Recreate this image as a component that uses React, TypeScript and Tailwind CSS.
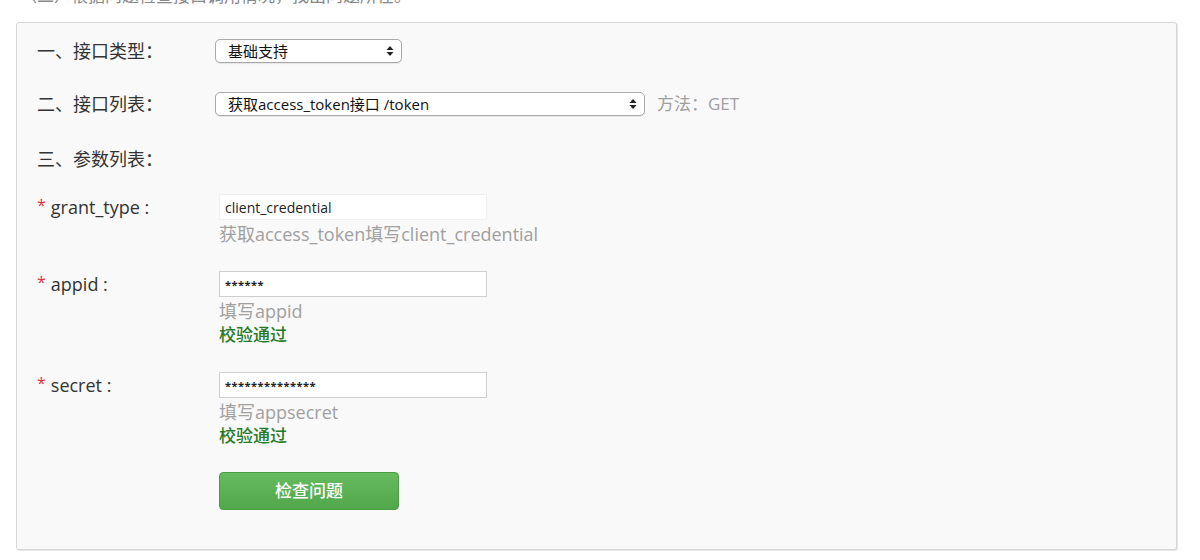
import React from "react";

const font = { fontFamily: '"Open Sans", "Noto Sans CJK SC", sans-serif' };

function UpDown() {
  return (
    <svg width="8" height="12" viewBox="0 0 8 12" className="shrink-0">
      <path d="M4 1 L7.5 5 H0.5 Z" fill="#222" />
      <path d="M4 11 L7.5 7 H0.5 Z" fill="#222" />
    </svg>
  );
}

function FakeSelect({ value, width }: { value: string; width: string }) {
  return (
    <div
      className={`${width} h-[24px] flex items-center justify-between pl-[12px] pr-[7px] bg-white border border-[#a9a9a9] rounded-[5px] text-[15px] text-[#111] shadow-[0_1px_1px_rgba(0,0,0,0.08)]`}
    >
      <span>{value}</span>
      <UpDown />
    </div>
  );
}

function Label({ children, required, w = "w-[182px]" }: { children: React.ReactNode; required?: boolean; w?: string }) {
  return (
    <div className={`${w} shrink-0 text-[18px] text-[#333] flex items-center`}>
      {required && <span className="text-[#e0323c] text-[16px] mr-[5px] -mt-[5px]">*</span>}
      {children}
    </div>
  );
}

function Field({
  label,
  value,
  hint,
  ok,
  faint,
}: {
  label: string;
  value: string;
  hint: string;
  ok?: boolean;
  faint?: boolean;
}) {
  return (
    <div>
      <div className="flex items-center h-[26px]">
        <Label required>{label}</Label>
        <input
          readOnly
          value={value}
          className={`w-[268px] h-[26px] bg-white px-[5px] outline-none text-[#222] border ${
            faint ? "border-[#f0f0f0] text-[14px]" : "border-[#cfcfcf] text-[11px] font-bold tracking-[0.5px]"
          }`}
          style={font}
        />
      </div>
      <div className="pl-[182px] text-[18px] leading-[24px] mt-[2px] text-[#a0a0a0]">{hint}</div>
      {ok && <div className="pl-[182px] text-[17px] leading-[24px] font-medium text-[#267a26]">校验通过</div>}
    </div>
  );
}

export default function App() {
  return (
    <div className="w-[1200px] h-[560px] bg-white overflow-hidden" style={font}>
      {/* cut-off heading line */}
      <div className="h-[7px] overflow-hidden pl-[20px]">
        <div className="-mt-[14px] text-[17px] text-[#888] leading-[20px]">
          （二）根据问题检查接口调用情况，找出问题所在。
        </div>
      </div>

      <div className="ml-[16px] mt-[15px] w-[1161px] bg-[#f9f9f9] border border-[#d6d6d6] rounded-[3px] shadow-[1px_1px_0_#e6e6e6] pl-[20px] pt-[16px] pb-[39px]">
        <div className="flex items-center h-[24px]">
          <Label w="w-[178px]">一、接口类型：</Label>
          <FakeSelect value="基础支持" width="w-[187px]" />
        </div>

        <div className="flex items-center h-[24px] mt-[29px]">
          <Label w="w-[178px]">二、接口列表：</Label>
          <FakeSelect value="获取access_token接口 /token" width="w-[430px]" />
          <span className="ml-[12px] text-[17px] text-[#a0a0a0]">方法：GET</span>
        </div>

        <div className="flex items-center h-[24px] mt-[31px]">
          <Label>三、参数列表：</Label>
        </div>

        <div className="mt-[23px] flex flex-col gap-[25px]">
          <Field label="grant_type :" value="client_credential" hint="获取access_token填写client_credential" faint />
          <Field label="appid :" value="******" hint="填写appid" ok />
          <Field label="secret :" value="**************" hint="填写appsecret" ok />
        </div>

        <div className="pl-[182px] mt-[24px]">
          <button className="w-[180px] h-[38px] rounded-[4px] border border-[#4a9d42] bg-gradient-to-b from-[#66bb5e] to-[#52a74a] text-white text-[17px] font-medium">
            检查问题
          </button>
        </div>
      </div>
    </div>
  );
}
